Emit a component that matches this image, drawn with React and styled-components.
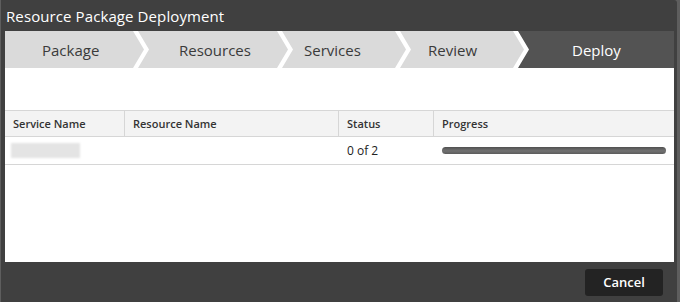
import React from 'react'
import styled, { createGlobalStyle } from 'styled-components'

const GlobalStyle = createGlobalStyle`
    html, body {
        margin:0;
        padding:0;
        background:#5e5e5e;
        font-family:"Open Sans", "DejaVu Sans", sans-serif;
    }
`

const steps = [
    { label: "Package", left: 0, width: 139, indent: 37 },
    { label: "Resources", left: 133, width: 150, indent: 41 },
    { label: "Services", left: 277, width: 124, indent: 22 },
    { label: "Review", left: 395, width: 124, indent: 28 },
    { label: "Deploy", left: 513, width: 156, indent: 54, active: true }
]

const columns = [
    { title: "Service Name", width: "119px" },
    { title: "Resource Name", width: "214px" },
    { title: "Status", width: "95px" },
    { title: "Progress", width: "1fr" }
]

function App() {
    return (
        <>
            <GlobalStyle />
            <Modal>
                <TitleBar>Resource Package Deployment</TitleBar>
                <Body>
                    <Steps>
                        {
                            steps.map((s, i) => (
                                <Step
                                    key={s.label}
                                    $width={s.width}
                                    $first={i === 0}
                                    $last={i === steps.length - 1}
                                    $active={s.active}
                                    $indent={s.indent}
                                >
                                    {s.label}
                                </Step>
                            ))
                        }
                    </Steps>
                    <Table>
                        <HeaderRow $cols={columns.map(c => c.width).join(' ')}>
                            {columns.map(c => <HeaderCell key={c.title}>{c.title}</HeaderCell>)}
                        </HeaderRow>
                        <Row $cols={columns.map(c => c.width).join(' ')}>
                            <Cell><Redacted /></Cell>
                            <Cell></Cell>
                            <Cell>0 of 2</Cell>
                            <Cell><ProgressBar /></Cell>
                        </Row>
                    </Table>
                </Body>
                <Footer>
                    <CancelButton>Cancel</CancelButton>
                </Footer>
            </Modal>
        </>
    )
}

export default App

const Modal = styled.div`
    margin-left:1px;
    width:676px;
    height:302px;
    background:#404040;
    border-top-right-radius:3px;
    display:flex;
    flex-direction:column;
`

const TitleBar = styled.div`
    height:31px;
    display:flex;
    align-items:center;
    padding-left:5px;
    color:#fff;
    font-size:15px;
    letter-spacing:0.1px;
`

const Body = styled.div`
    margin:0 3px 0 4px;
    height:231px;
    background:#fff;
`

const Steps = styled.div`
    display:flex;
    height:37px;
`

const Step = styled.div`
    flex:0 0 ${p => p.$width}px;
    margin-left:${p => p.$first ? 0 : -6}px;
    height:37px;
    display:flex;
    align-items:center;
    padding-left:${p => p.$indent}px;
    box-sizing:border-box;
    font-size:15px;
    color:${p => p.$active ? '#fff' : '#3a3a3a'};
    background:${p => p.$active ? '#535353' : '#dadada'};
    clip-path:polygon(
        0 0,
        ${p => p.$last ? '100% 0, 100% 100%' : 'calc(100% - 11px) 0, 100% 50%, calc(100% - 11px) 100%'},
        0 100%
        ${p => p.$first ? '' : ', 11px 50%'}
    );
`

const Table = styled.div`
    margin-top:42px;
`

const HeaderRow = styled.div`
    display:grid;
    grid-template-columns:${p => p.$cols};
    height:27px;
    background:#f3f3f3;
    border-top:1px solid #d6d6d6;
    border-bottom:1px solid #d6d6d6;
    box-sizing:border-box;
`

const HeaderCell = styled.div`
    display:flex;
    align-items:center;
    padding-left:8px;
    font-size:11px;
    font-weight:600;
    color:#333;
    & + & {
        border-left:1px solid #d6d6d6;
    }
`

const Row = styled.div`
    display:grid;
    grid-template-columns:${p => p.$cols};
    height:28px;
    border-bottom:1px solid #d6d6d6;
    box-sizing:border-box;
`

const Cell = styled.div`
    display:flex;
    align-items:center;
    padding-left:9px;
    padding-right:8px;
    font-size:12px;
    color:#222;
    &:first-child{
        padding-left:6px;
    }
`

const Redacted = styled.div`
    width:69px;
    height:15px;
    background:#e4e4e4;
    filter:blur(1px);
`

const ProgressBar = styled.div`
    flex:1;
    height:7px;
    border-radius:4px;
    background:linear-gradient(to bottom, #505050, #727272 55%, #5c5c5c);
`

const Footer = styled.div`
    flex:1;
    display:flex;
    align-items:center;
    justify-content:flex-end;
    padding-right:14px;
`

const CancelButton = styled.button`
    width:78px;
    height:27px;
    border:none;
    border-radius:3px;
    background:#232323;
    color:#fff;
    font-family:"Open Sans", "DejaVu Sans", sans-serif;
    font-size:13px;
    font-weight:600;
    cursor:pointer;
`
